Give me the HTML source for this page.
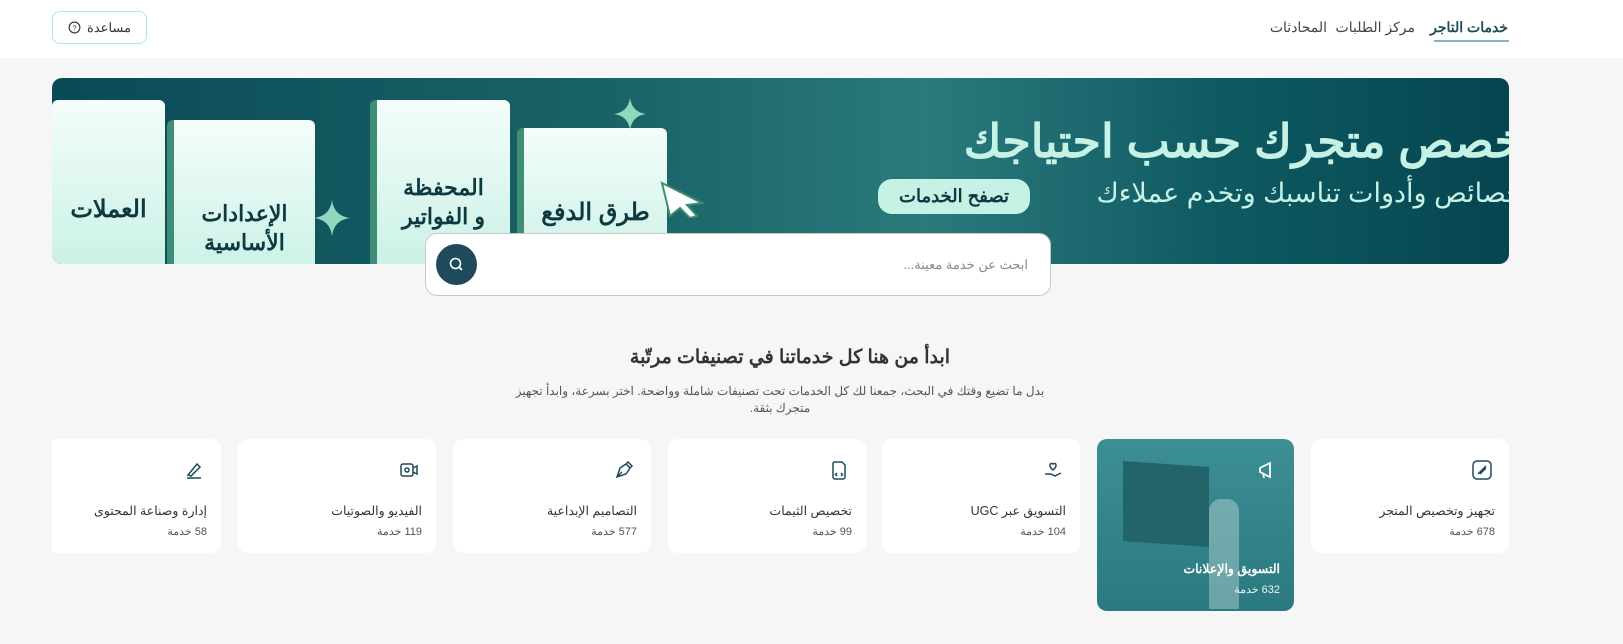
<!DOCTYPE html>
<html dir="rtl" lang="ar"><head><meta charset="utf-8">
<style>
*{box-sizing:border-box;margin:0;padding:0}
body{width:1623px;height:644px;overflow:hidden;background:#f6f6f6;font-family:"Liberation Sans","Noto Sans CJK SC",sans-serif;position:relative;color:#333}
.hdr{position:absolute;left:0;top:0;width:1623px;height:58px;background:#fff}
.nav{position:absolute;top:19px;font-size:14px;color:#444;white-space:nowrap}
.help{position:absolute;left:52px;top:11px;width:95px;height:33px;border:1px solid #a8ecd8;border-radius:8px;font-size:13px;color:#333;display:flex;align-items:center;justify-content:center;gap:6px}
.banner{position:absolute;left:52px;top:78px;width:1457px;height:186px;border-radius:10px;overflow:hidden;background:linear-gradient(90deg,#0a4a56 0%,#1a6468 40%,#2a7a7c 60%,#0f5a62 80%,#054550 100%)}
.pg{position:absolute;background:linear-gradient(180deg,#f4fdfa,#c9f1e6);border-radius:6px;border-left:7px solid #3e8e75;font-weight:bold;color:#0d3a40;text-align:center;white-space:nowrap}
.search{position:absolute;left:425px;top:233px;width:626px;height:63px;background:#fff;border:1px solid #c8c8c8;border-radius:12px}
.card{position:absolute;top:439px;height:114px;background:#fff;border-radius:10px}
.card .t{position:absolute;right:14px;top:64px;font-size:12.5px;color:#333;white-space:nowrap}
.card .n{position:absolute;right:14px;top:86px;font-size:11px;color:#555;white-space:nowrap}
.card svg{position:absolute;right:16px;top:20px}
</style></head><body>
<div class="hdr">
 <div class="nav" style="right:115px;color:#1e4a5a;font-weight:bold">خدمات التاجر</div>
 <div style="position:absolute;left:1434px;top:40px;width:75px;height:2px;background:#7fb8c0"></div>
 <div class="nav" style="right:208px">مركز الطلبات</div>
 <div class="nav" style="right:296px">المحادثات</div>
 <div class="help"><span>مساعدة</span><svg width="13" height="13" viewBox="0 0 14 14"><circle cx="7" cy="7" r="5.8" fill="none" stroke="#333" stroke-width="1.2"/><text x="7" y="10" font-size="8" text-anchor="middle" fill="#333" font-family="Liberation Sans">?</text></svg></div>
</div>
<div class="banner">
 <div style="position:absolute;right:-28px;top:36px;font-size:46px;font-weight:bold;color:#c6f2e6;white-space:nowrap">تخصص متجرك حسب احتياجك</div>
 <div style="position:absolute;right:-14px;top:100px;font-size:27px;color:#c6f2e6;white-space:nowrap">خصائص وأدوات تناسبك وتخدم عملاءك</div>
 <div style="position:absolute;left:826px;top:101px;width:152px;height:35px;border-radius:14px;background:#c6f2e6;color:#0d3a40;font-size:18px;font-weight:bold;text-align:center;line-height:34px">تصفح الخدمات</div>
 <div class="pg" style="left:0;top:22px;width:113px;height:170px;border-left:none;padding-top:95px;font-size:24px">العملات</div>
 <div class="pg" style="left:115px;top:42px;width:148px;height:160px;padding-top:80px;font-size:22px;line-height:1.3">الإعدادات<br>الأساسية</div>
 <div class="pg" style="left:318px;top:22px;width:140px;height:170px;padding-top:74px;font-size:22px;line-height:1.3">المحفظة<br>و الفواتير</div>
 <div class="pg" style="left:465px;top:50px;width:150px;height:150px;padding-top:70px;font-size:24px">طرق الدفع</div>
 <svg style="position:absolute;left:600px;top:100px" width="60" height="40"><path d="M10 5 L50 25 L35 27 L45 38 L38 40 L28 30 L18 38 Z" fill="#fff" stroke="#3e8e75" stroke-width="2"/></svg>
 <svg style="position:absolute;left:560px;top:18px" width="36" height="36"><path d="M18 2 Q20 16 34 18 Q20 20 18 34 Q16 20 2 18 Q16 16 18 2Z" fill="#8fd8be"/></svg>
 <svg style="position:absolute;left:260px;top:120px" width="40" height="40"><path d="M20 2 Q22 18 38 20 Q22 22 20 38 Q18 22 2 20 Q18 18 20 2Z" fill="#8fd8be"/></svg>
</div>
<div class="search">
 <div style="position:absolute;right:22px;top:23px;font-size:13px;color:#888">ابحث عن خدمة معينة...</div>
 <div style="position:absolute;left:10px;top:10px;width:41px;height:41px;border-radius:50%;background:#1e4a5a"><svg width="41" height="41"><circle cx="19.5" cy="19.5" r="5" fill="none" stroke="#fff" stroke-width="1.6"/><path d="M23 23 L26 26" stroke="#fff" stroke-width="1.6"/></svg></div>
</div>
<div style="position:absolute;left:0;width:1580px;top:346px;text-align:center;font-size:19px;font-weight:bold;color:#333">ابدأ من هنا كل خدماتنا في تصنيفات مرتّبة</div>
<div style="position:absolute;left:500px;width:560px;top:383px;text-align:center;font-size:12px;color:#555;line-height:17px">بدل ما تضيع وقتك في البحث، جمعنا لك كل الخدمات تحت تصنيفات شاملة وواضحة. اختر بسرعة، وابدأ تجهيز متجرك بثقة.</div>

<div class="card" style="left:1311px;width:198px"><svg width="22" height="22" viewBox="0 0 22 22" fill="none" stroke="#1e4a5a" stroke-width="1.5"><rect x="2" y="2" width="18" height="18" rx="4"/><path d="M7 15 L15 7 M9 15 L15 9"/></svg><div class="t">تجهيز وتخصيص المتجر</div><div class="n">678 خدمة</div></div>
<div class="card" style="left:1097px;width:197px;height:172px;background:linear-gradient(180deg,#3c8f95,#2a7a80)"><svg width="22" height="22" viewBox="0 0 22 22" fill="none" stroke="#fff" stroke-width="1.8"><path d="M4 9 L14 4 L14 18 L4 13 Z M4 9 L4 13 M7 14 L8 19"/></svg><div style="position:absolute;left:26px;top:25px;width:86px;height:80px;background:#23646a;transform:skewY(4deg)"></div><div style="position:absolute;left:112px;top:60px;width:30px;height:110px;background:#e6f0ee;opacity:.35;border-radius:12px 12px 0 0"></div><div class="t" style="top:122px;color:#fff;font-weight:bold">التسويق والإعلانات</div><div class="n" style="top:144px;color:#e8f4f4">632 خدمة</div></div>
<div class="card" style="left:882px;width:198px"><svg width="22" height="22" viewBox="0 0 22 22" fill="none" stroke="#1e4a5a" stroke-width="1.5"><path d="M11 11 C6 7 8 3 11 5 C14 3 16 7 11 11Z M3 15 L9 15 L13 17 L19 14"/></svg><div class="t">التسويق عبر UGC</div><div class="n">104 خدمة</div></div>
<div class="card" style="left:668px;width:198px"><svg width="22" height="22" viewBox="0 0 22 22" fill="none" stroke="#1e4a5a" stroke-width="1.5"><path d="M6 3 H14 L17 6 V18 A2 2 0 0 1 15 20 H7 A2 2 0 0 1 5 18 V4Z M9 14 L7.5 15.5 L9 17 M13 14 L14.5 15.5 L13 17"/></svg><div class="t">تخصيص الثيمات</div><div class="n">99 خدمة</div></div>
<div class="card" style="left:453px;width:198px"><svg width="22" height="22" viewBox="0 0 22 22" fill="none" stroke="#1e4a5a" stroke-width="1.5"><path d="M4 18 L7 9 L13 5 L17 9 L13 15 Z M4 18 L9 13 M13 5 L15 3 L19 7 L17 9"/></svg><div class="t">التصاميم الإبداعية</div><div class="n">577 خدمة</div></div>
<div class="card" style="left:238px;width:198px"><svg width="22" height="22" viewBox="0 0 22 22" fill="none" stroke="#1e4a5a" stroke-width="1.5"><rect x="3" y="5" width="12" height="12" rx="2"/><path d="M15 9 L19 7 V15 L15 13"/><circle cx="9" cy="11" r="2"/></svg><div class="t">الفيديو والصوتيات</div><div class="n">119 خدمة</div></div>
<div class="card" style="left:52px;width:169px;border-radius:0 10px 10px 0"><svg width="22" height="22" viewBox="0 0 22 22" fill="none" stroke="#1e4a5a" stroke-width="1.5"><path d="M5 16 L14 5 L17 8 L8 17 Z M4 19 H18"/></svg><div class="t">إدارة وصناعة المحتوى</div><div class="n">58 خدمة</div></div>
</body></html>
